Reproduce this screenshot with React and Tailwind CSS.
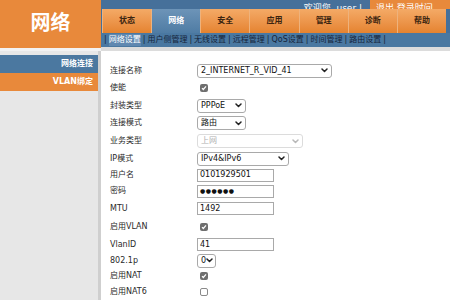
const ORANGE = "bg-[#e8893b]";

const tabs = ["状态", "网络", "安全", "应用", "管理", "诊断", "帮助"];
const subs = ["网络设置", "用户侧管理", "无线设置", "远程管理", "QoS设置", "时间管理", "路由设置"];

function Chevron({ light }) {
  return (
    <svg width="7" height="5" viewBox="0 0 7 5" className="shrink-0">
      <path d="M1 1l2.5 2.5L6 1" fill="none" stroke={light ? "#b8b8b8" : "#222"} strokeWidth="1.5" strokeLinecap="round" strokeLinejoin="round" />
    </svg>
  );
}

function Select({ value, w, disabled }) {
  return (
    <div
      className={`flex h-[14px] items-center justify-between rounded-[3px] border bg-white pl-[3px] pr-[3px] ${w} ${
        disabled ? "border-[#dcdcdc] text-[#b0b0b0]" : "border-[#a9a9a9] text-[#111]"
      }`}
    >
      <span className="leading-none">{value}</span>
      <Chevron light={disabled} />
    </div>
  );
}

function Input({ value, w, small }) {
  return (
    <div
      className={`flex h-[13px] items-center border border-[#a9a9a9] bg-white pl-[2px] leading-none text-[#111] ${w} ${
        small ? "text-[6px] tracking-[0.5px]" : ""
      }`}
    >
      {value}
    </div>
  );
}

function Check({ on }) {
  if (!on)
    return <div className="ml-[3px] h-[8px] w-[8px] rounded-[2px] border border-[#8a8a8a] bg-white" />;
  return (
    <div className="ml-[3px] flex h-[8px] w-[8px] items-center justify-center rounded-[2px] bg-[#6f6f6f]">
      <svg width="6" height="6" viewBox="0 0 6 6">
        <path d="M1 3.2l1.3 1.3L5 1.3" fill="none" stroke="#fff" strokeWidth="1.2" />
      </svg>
    </div>
  );
}

const rows = [
  { label: "连接名称", h: "h-[17px]", c: <Select value="2_INTERNET_R_VID_41" w="w-[135px]" /> },
  { label: "使能", h: "h-[17.5px]", c: <Check on /> },
  { label: "封装类型", h: "h-[18px]", c: <Select value="PPPoE" w="w-[49px]" /> },
  { label: "连接模式", h: "h-[17.5px]", c: <Select value="路由" w="w-[49px]" /> },
  { label: "业务类型", h: "h-[18px]", c: <Select value="上网" w="w-[106px]" disabled /> },
  { label: "IP模式", h: "h-[17px]", c: <Select value="IPv4&IPv6" w="w-[92px]" /> },
  { label: "用户名", h: "h-[16px]", c: <Input value="0101929501" w="w-[77px]" /> },
  { label: "密码", h: "h-[16.5px]", c: <Input value="●●●●●●" w="w-[77px]" small /> },
  { label: "MTU", h: "h-[18px]", c: <Input value="1492" w="w-[77px]" /> },
  { label: "启用VLAN", h: "h-[18.5px]", c: <Check on /> },
  { label: "VlanID", h: "h-[17px]", c: <Input value="41" w="w-[77px]" /> },
  { label: "802.1p", h: "h-[15.5px]", c: <Select value="0" w="w-[19px]" /> },
  { label: "启用NAT", h: "h-[15.5px]", c: <Check on /> },
  { label: "启用NAT6", h: "h-[16px]", c: <Check /> },
];

export default function App() {
  return (
    <div className="flex h-[300px] w-[450px] overflow-hidden bg-white font-['DejaVu_Sans','Noto_Sans_CJK_SC',sans-serif] text-[8px]">
      {/* left column */}
      <aside className="flex w-[101px] shrink-0 flex-col">
        <div className={`flex h-[48px] items-center justify-center ${ORANGE} pb-[2px] text-[20px] font-bold text-white`}>
          网络
        </div>
        <div className="h-[3px] bg-[#f2f2f2]" />
        <div className="flex-1 border-r-[3px] border-[#cfcfcf] bg-[#e7e7e7] pt-[4px]">
          <div className="flex h-[18px] items-center justify-end bg-[#4b78a0] pr-[5px] font-bold text-white">网络连接</div>
          <div className={`flex h-[18px] items-center justify-end ${ORANGE} pr-[5px] font-bold text-white`}>VLAN绑定</div>
        </div>
      </aside>

      {/* right column */}
      <main className="flex min-w-0 flex-1 flex-col">
        <div className="flex h-[9px] overflow-hidden bg-[#46709a]">
          <div className="flex flex-1 items-end justify-end overflow-hidden pr-[8px]">
            <span className="-mb-[5px] text-[9px] leading-[12px] text-white">欢迎您, user |</span>
          </div>
          <div className={`flex w-[80px] items-end overflow-hidden ${ORANGE} pl-[6px]`}>
            <span className="-mb-[5px] text-[9px] leading-[12px] text-white">退出 登录时间</span>
          </div>
        </div>

        <div className="flex h-[25px] bg-[#46709a] pl-[1px] pr-[4px]">
          {tabs.map((t) => (
            <div
              key={t}
              className={`flex flex-1 items-center justify-center border-l border-[#eeb27c] font-bold ${
                t === "网络"
                  ? "bg-gradient-to-b from-[#6d94b8] to-[#4f7ca4] text-white"
                  : "bg-gradient-to-b from-[#f4aa66] to-[#e5832f] text-[#3a2410]"
              }`}
            >
              {t}
            </div>
          ))}
        </div>

        <div className="flex h-[15px] items-center bg-[#4a78a1] pl-[1px] text-[#15243a]">
          {subs.map((s, i) => (
            <span key={s} className="flex items-center">
              <span className="px-[2px]">|</span>
              <span className={i === 0 ? "bg-[#6088b0] text-white" : ""}>{s}</span>
            </span>
          ))}
          <span className="px-[2px]">|</span>
        </div>

        <div className="h-[4px] bg-[#dcdcdc]" />

        <div className="flex flex-col pt-[11px] text-[#2a2a2a]">
          {rows.map((r) => (
            <div key={r.label} className={`flex items-center ${r.h}`}>
              <div className="w-[96px] shrink-0 pl-[9px]">{r.label}</div>
              {r.c}
            </div>
          ))}
        </div>
      </main>
    </div>
  );
}
